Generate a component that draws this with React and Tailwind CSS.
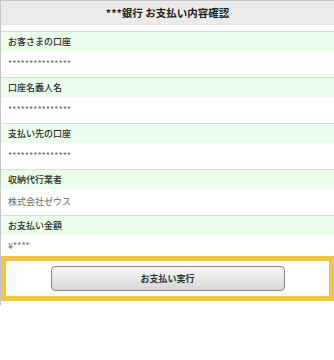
export default function App() {
  const rows = [
    ["お客さまの口座", "***************"],
    ["口座名義人名", "***************"],
    ["支払い先の口座", "***************"],
    ["収納代行業者", "株式会社ゼウス"],
    ["お支払い金額", "¥****"],
  ];
  return (
    <div className="w-[334px] h-[360px] bg-white overflow-hidden" style={{ fontFamily: '"Noto Sans CJK JP", "Noto Sans", sans-serif' }}>
      <div className="border-l border-[#c4c4c4] pb-[4px]">
        <div className="h-[25px] border-t border-[#c8c8c8] bg-[#ebebeb] flex items-center justify-center text-[10.5px] font-bold text-[#222]">
          ***銀行 お支払い内容確認
        </div>
        <div className="h-[6px]" />
        {rows.map(([label, value], i) => (
          <div key={i} className="border-t border-[#d9d9d9]">
            <div className="h-[19px] bg-[#ebfdeb] flex items-center px-[7px] text-[9px] font-medium text-[#2a2a2a]">{label}</div>
            <div className={`${i === rows.length - 1 ? "h-[21px]" : "h-[26px]"} flex items-center px-[7px] text-[9px] text-[#6a6a6a]`}>{value}</div>
          </div>
        ))}
        <div className="h-[45px] w-[333px] border-[5px] border-[#f0c646] bg-white flex items-center justify-center">
          <button className="w-[234px] h-[25px] rounded-[4px] border border-[#8a8a8a] bg-gradient-to-b from-[#f6f6f6] to-[#d8d8d8] text-[9px] font-bold text-[#333] flex items-center justify-center">
            お支払い実行
          </button>
        </div>
      </div>
    </div>
  );
}
